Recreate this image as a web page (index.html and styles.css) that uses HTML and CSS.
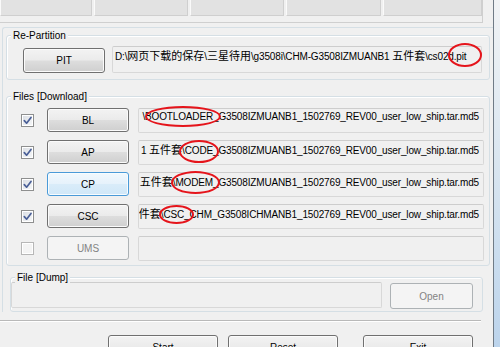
FILE: index.html
```html
<!DOCTYPE html>
<html lang="zh-CN">
<head>
<meta charset="utf-8">
<title>Odin</title>
<link rel="stylesheet" href="styles.css">
</head>
<body>
<div class="window">
  <div class="client">
    <div class="topbar">
      <div class="cells">
        <div class="cell"></div><div class="cell"></div><div class="cell"></div><div class="cell"></div><div class="cell"></div>
      </div>
    </div>

    <div class="panel">
      <div class="group repartition">
        <span class="group-label">Re-Partition</span>
        <div class="row">
          <button class="btn pit">PIT</button>
          <div class="field path">D:\<span class="cjk">网页下载的保存</span>\<span class="cjk">三星待用</span>\g3508i\CHM-G3508IZMUANB1 <span class="cjk">五件套</span>\cs02d.pit</div>
        </div>
      </div>

      <div class="group files">
        <span class="group-label">Files [Download]</span>
        <div class="file-row">
          <span class="check"><svg viewBox="0 0 11 11" width="11" height="11"><path d="M2.3 5.6 L4.6 8.2 L9 2.4" /></svg></span>
          <button class="btn slot">BL</button>
          <div class="field tail"><span>\BOOTLOADER_G3508IZMUANB1_1502769_REV00_user_low_ship.tar.md5</span></div>
        </div>
        <div class="file-row">
          <span class="check"><svg viewBox="0 0 11 11" width="11" height="11"><path d="M2.3 5.6 L4.6 8.2 L9 2.4" /></svg></span>
          <button class="btn slot">AP</button>
          <div class="field tail"><span>1 <span class="cjk">五件套</span>\CODE_G3508IZMUANB1_1502769_REV00_user_low_ship.tar.md5</span></div>
        </div>
        <div class="file-row">
          <span class="check"><svg viewBox="0 0 11 11" width="11" height="11"><path d="M2.3 5.6 L4.6 8.2 L9 2.4" /></svg></span>
          <button class="btn slot hot">CP</button>
          <div class="field tail"><span><span class="cjk">五件套</span>\MODEM_G3508IZMUANB1_1502769_REV00_user_low_ship.tar.md5</span></div>
        </div>
        <div class="file-row">
          <span class="check"><svg viewBox="0 0 11 11" width="11" height="11"><path d="M2.3 5.6 L4.6 8.2 L9 2.4" /></svg></span>
          <button class="btn slot">CSC</button>
          <div class="field tail"><span><span class="cjk">件套</span>\CSC_CHM_G3508ICHMANB1_1502769_REV00_user_low_ship.tar.md5</span></div>
        </div>
        <div class="file-row">
          <span class="check off"></span>
          <button class="btn slot disabled">UMS</button>
          <div class="field tail"></div>
        </div>
      </div>

      <div class="group dump">
        <span class="group-label">File [Dump]</span>
        <div class="row">
          <div class="field dump-field"></div>
          <button class="btn open disabled">Open</button>
        </div>
      </div>
    </div>

    <div class="separator"></div>

    <div class="actions">
      <button class="btn action">Start</button>
      <button class="btn action reset">Reset</button>
      <button class="btn action exit">Exit</button>
    </div>
  </div>
  <div class="frame-edge"></div>

  <span class="mark mark-pit"></span>
  <span class="mark mark-bl"></span>
  <span class="mark mark-ap"></span>
  <span class="mark mark-cp"></span>
  <span class="mark mark-csc"></span>
</div>
</body>
</html>
```

FILE: styles.css
```css
* { box-sizing: border-box; }

html, body {
  margin: 0;
  padding: 0;
}

body {
  width: 500px;
  height: 347px;
  overflow: hidden;
  background: #f0f0f0;
  font-family: "Liberation Sans", Arial, "Noto Sans CJK SC", sans-serif;
  font-size: 10px;
  color: #000;
}

.window {
  position: relative;
  display: flex;
  width: 500px;
  height: 347px;
}

.client {
  flex: none;
  width: 493px;
}

.frame-edge {
  flex: 1;
  border-left: 1px solid #707b86;
  background: linear-gradient(#f1f3f5, #dbe6f0 45%, #bcd4ec);
}

/* top strip */
.topbar {
  width: 483px;
  height: 23px;
  border-right: 1px solid #cfcfcf;
  border-bottom: 1px solid #cfcfcf;
}

.cells {
  display: grid;
  grid-template-columns: 92px 94px 94px 95px 1fr;
  gap: 2px;
  height: 16px;
}

.cell {
  background: #e2e2e2;
  border-right: 1px solid #cfcfcf;
  border-bottom: 1px solid #cfcfcf;
  border-left: 1px solid #fafafa;
}

/* main panel */
.panel {
  margin-top: 4px;
  margin-left: 2px;
  border-left: 1px solid #d5dfe5;
  border-top: 1px solid #d5dfe5;
  border-top-left-radius: 3px;
  padding: 7px 0 0 3px;
}

.group {
  position: relative;
  border: 1px solid #d5dfe5;
  border-radius: 3px;
  box-shadow: inset 1px 1px 0 #fff;
}

.group-label {
  position: absolute;
  left: 4px;
  top: -7px;
  padding: 0 2px;
  line-height: 13px;
  background: #f0f0f0;
  white-space: nowrap;
}

.row {
  display: flex;
  align-items: flex-start;
}

.repartition {
  width: 484px;
  height: 45px;
  padding: 10px 7px 0 16px;
}

.files {
  width: 484px;
  height: 170px;
  margin-top: 16px;
  padding: 11px 5px 0 14px;
  display: flex;
  flex-direction: column;
  gap: 7px;
}

.dump {
  width: 473px;
  height: 35px;
  margin-top: 11px;
  margin-left: 4px;
  padding: 4px 9px 0 0;
}

/* buttons */
.btn {
  font: inherit;
  color: #000;
  padding: 0;
  border: 1px solid #707070;
  border-radius: 3px;
  background: linear-gradient(#f3f3f3, #ebebeb 48%, #dddddd 52%, #cfcfcf);
  box-shadow: inset 0 0 0 1px #fbfbfb;
  text-align: center;
}

.btn.pit {
  width: 82px;
  height: 25px;
  margin-top: 2px;
  margin-right: 7px;
}

.btn.slot {
  width: 82px;
  height: 24px;
  margin-right: 9px;
}

.btn.hot {
  border-color: #4a9ad8;
  background: linear-gradient(#f1f8fd, #e6f2fb 48%, #d9ecf9 52%, #d0e7f8);
  box-shadow: inset 0 0 0 1px #f7fcff;
}

.btn.disabled {
  color: #838383;
  border-color: #adb2b5;
  background: #f4f4f4;
  box-shadow: none;
}

.btn.open {
  width: 83px;
  height: 26px;
  margin-top: 1px;
  margin-left: 8px;
}

/* fields */
.field {
  flex: 1;
  min-width: 0;
  border: 1px solid #d8d8d8;
  border-top-color: #cdcdcd;
  border-radius: 2px;
  background: #f0f0f0;
  overflow: hidden;
  white-space: nowrap;
  line-height: 12px;
  letter-spacing: -0.15px;
}

.cjk {
  font-family: "Noto Sans CJK SC", sans-serif;
  font-size: 11px;
  letter-spacing: 0;
}

.field.path {
  height: 27px;
  padding: 2px 3px 0 2px;
}

.field.tail {
  height: 25px;
  padding: 2px 4px 0 2px;
  display: flex;
  justify-content: flex-end;
}

.field.tail > span {
  flex: none;
}

.field.dump-field {
  height: 26px;
}

/* rows & checkboxes */
.file-row {
  display: flex;
  align-items: center;
  height: 25px;
  flex: none;
}

.file-row .btn.slot {
  align-self: flex-start;
}

.check {
  flex: none;
  width: 13px;
  height: 13px;
  margin-right: 13px;
  border: 1px solid #8e8f8f;
  background: linear-gradient(135deg, #d9dde3, #f7f8f9);
  box-shadow: inset 0 0 0 1px #ffffff;
  display: flex;
  align-items: center;
  justify-content: center;
}

.check svg path {
  fill: none;
  stroke: #4a5f97;
  stroke-width: 1.7;
  stroke-linecap: round;
  stroke-linejoin: round;
}

.check.off {
  border-color: #b7b7b7;
  background: #f4f4f4;
}

/* bottom */
.separator {
  width: 481px;
  height: 2px;
  margin-top: 8px;
  border-top: 1px solid #b9b9b9;
  border-bottom: 1px solid #ffffff;
}

.actions {
  display: flex;
  margin-top: 13px;
  padding-left: 108px;
}

.btn.action {
  width: 110px;
  height: 24px;
}

.btn.reset { margin-left: 10px; }
.btn.exit { margin-left: 25px; }

/* red annotation ellipses */
.mark {
  position: absolute;
  border: 2px solid #e5141b;
  border-radius: 50%;
  pointer-events: none;
}

.mark-pit { left: 448px; top: 43px; width: 34px; height: 24px; }
.mark-bl  { left: 145px; top: 106px; width: 76px; height: 21px; }
.mark-ap  { left: 179px; top: 140px; width: 40px; height: 23px; }
.mark-cp  { left: 171px; top: 171px; width: 49px; height: 23px; }
.mark-csc { left: 159px; top: 205px; width: 35px; height: 19px; }
```
